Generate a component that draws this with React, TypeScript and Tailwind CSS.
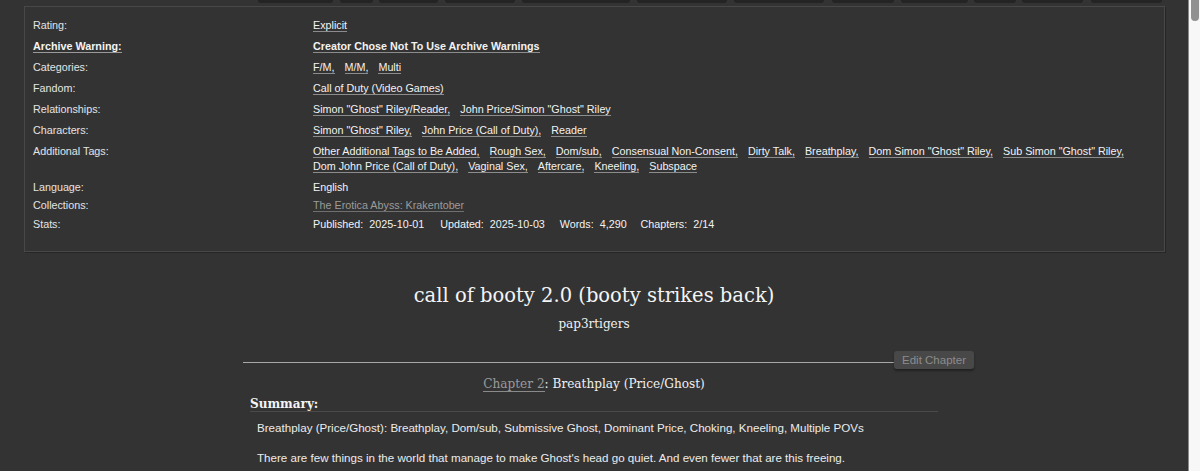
import React from "react";

const sans = "font-['Liberation_Sans',Arial,sans-serif]";
const serif = "font-['DejaVu_Serif',Georgia,serif]";

type Row = {
  label: string;
  values: string[];
  boldLabel?: boolean;
  bold?: boolean;
  plain?: boolean;
  gray?: boolean;
  mt: string;
};

const rows: Row[] = [
  { label: "Rating:", values: ["Explicit"], mt: "mt-0" },
  {
    label: "Archive Warning:",
    values: ["Creator Chose Not To Use Archive Warnings"],
    boldLabel: true,
    bold: true,
    mt: "mt-[6px]",
  },
  { label: "Categories:", values: ["F/M", "M/M", "Multi"], mt: "mt-[6px]" },
  { label: "Fandom:", values: ["Call of Duty (Video Games)"], mt: "mt-[6px]" },
  {
    label: "Relationships:",
    values: ['Simon "Ghost" Riley/Reader', 'John Price/Simon "Ghost" Riley'],
    mt: "mt-[6px]",
  },
  {
    label: "Characters:",
    values: ['Simon "Ghost" Riley', "John Price (Call of Duty)", "Reader"],
    mt: "mt-[6px]",
  },
  {
    label: "Additional Tags:",
    values: [
      "Other Additional Tags to Be Added",
      "Rough Sex",
      "Dom/sub",
      "Consensual Non-Consent",
      "Dirty Talk",
      "Breathplay",
      'Dom Simon "Ghost" Riley',
      'Sub Simon "Ghost" Riley',
      "Dom John Price (Call of Duty)",
      "Vaginal Sex",
      "Aftercare",
      "Kneeling",
      "Subspace",
    ],
    mt: "mt-[6px]",
  },
  { label: "Language:", values: ["English"], plain: true, mt: "mt-[6px]" },
  {
    label: "Collections:",
    values: ["The Erotica Abyss: Krakentober"],
    gray: true,
    mt: "mt-[3px]",
  },
];

const tabs = [
  { w: "w-[75px]", ml: "ml-0" },
  { w: "w-[33px]", ml: "ml-[7px]" },
  { w: "w-[59px]", ml: "ml-[6px]" },
  { w: "w-[70px]", ml: "ml-[7px]" },
  { w: "w-[108px]", ml: "ml-[7px]" },
  { w: "w-[90px]", ml: "ml-[7px]" },
  { w: "w-[90px]", ml: "ml-[7px]" },
  { w: "w-[62px]", ml: "ml-[8px]" },
  { w: "w-[67px]", ml: "ml-[7px]" },
  { w: "w-[42px]", ml: "ml-[6px]" },
  { w: "w-[61px]", ml: "ml-[6px]" },
  { w: "w-[71px]", ml: "ml-[8px]" },
];

function MetaRow({ row }: { row: Row }) {
  return (
    <div className={`flex ${row.mt} leading-[15px]`}>
      <div className="w-[280px] shrink-0">
        {row.boldLabel ? (
          <span className="font-bold text-[#f4f4f4] border-b border-[#9a9a9a]">
            {row.label}
          </span>
        ) : (
          <span className="text-[#e4e4e4]">{row.label}</span>
        )}
      </div>
      <div className="flex flex-1 flex-wrap gap-x-[10px]">
        {row.values.map((v, i) => (
          <div key={i}>
            {row.plain ? (
              <span className="text-[#f2f2f2]">{v}</span>
            ) : (
              <span
                className={`border-b ${
                  row.gray
                    ? "text-[#9b9b9b] border-[#6f6f6f]"
                    : "text-[#f2f2f2] border-[#8c8c8c]"
                } ${row.bold ? "font-bold" : ""}`}
              >
                {v}
                {i < row.values.length - 1 ? "," : ""}
              </span>
            )}
          </div>
        ))}
      </div>
    </div>
  );
}

export default function App() {
  return (
    <div className={`flex h-[471px] w-full overflow-hidden bg-[#333333] ${sans}`}>
      <div className="flex flex-1 flex-col">
        {/* top tabs remnants */}
        <div className="flex h-[3px] pl-[258px]">
          {tabs.map((t, i) => (
            <div
              key={i}
              className={`${t.w} ${t.ml} h-[3px] rounded-b-[3px] bg-[#242424]`}
            />
          ))}
        </div>

        {/* meta box */}
        <div className="mx-[23px] ml-[24px] mt-[3px] border border-[#484848] shadow-[1px_1px_0_#262626] pl-[8px] pr-[8px] pt-[11px] pb-[19px] text-[10.75px]">
          {rows.map((r, i) => (
            <MetaRow key={i} row={r} />
          ))}
          <div className="flex mt-[4px] leading-[15px]">
            <div className="w-[280px] shrink-0 text-[#e4e4e4]">Stats:</div>
            <div className="flex text-[#f2f2f2]">
              <span>Published:</span>
              <span className="ml-[6px]">2025-10-01</span>
              <span className="ml-[16px]">Updated:</span>
              <span className="ml-[6px]">2025-10-03</span>
              <span className="ml-[15px]">Words:</span>
              <span className="ml-[6px]">4,290</span>
              <span className="ml-[14px]">Chapters:</span>
              <span className="ml-[6px]">2/14</span>
            </div>
          </div>
        </div>

        {/* title */}
        <div className={`${serif} mt-[30px] text-center text-[19.5px] leading-[28px] text-[#f4f4f4]`}>
          call of booty 2.0 (booty strikes back)
        </div>
        <div className={`${serif} mt-[4px] text-center text-[12px] leading-[20px] text-[#f0f0f0]`}>
          pap3rtigers
        </div>

        {/* divider + edit chapter */}
        <div className="mt-[17px] flex items-start pl-[243px]">
          <div className="mt-[11px] h-px w-[651px] bg-[#a8a8a8]" />
          <div className="h-[18px] w-[80px] rounded-[3px] bg-[#484848] shadow-[0_2px_2px_#222] text-center text-[11.5px] leading-[18px] text-[#8c8c8c]">
            Edit Chapter
          </div>
        </div>

        {/* chapter heading */}
        <div className={`${serif} mt-[5px] text-center text-[12.1px] leading-[20px] text-[#f0f0f0]`}>
          <span className="text-[#9a9a9a] border-b border-[#8a8a8a]">Chapter 2</span>
          : Breathplay (Price/Ghost)
        </div>

        {/* summary */}
        <div className="mx-auto mt-[1px] w-[688px]">
          <div className={`${serif} border-b border-[#4a4a4a] pt-[2px] text-[12px] font-bold leading-[14px] text-[#f4f4f4]`}>
            Summary:
          </div>
          <div className="pl-[7px] pt-[8px] text-[11.6px] leading-[15px] text-[#ececec]">
            <p>
              Breathplay (Price/Ghost): Breathplay, Dom/sub, Submissive Ghost, Dominant Price, Choking, Kneeling, Multiple POVs
            </p>
            <p className="mt-[15px]">
              There are few things in the world that manage to make Ghost's head go quiet. And even fewer that are this freeing.
            </p>
          </div>
        </div>
      </div>

      {/* scrollbar */}
      <div className="flex w-[12px] shrink-0 border-l border-[#8a8a8a] bg-[#f7f7f7]">
        <div className="ml-[2px] h-[21px] w-[8px] rounded-b-[4px] bg-[#909090]" />
      </div>
    </div>
  );
}
